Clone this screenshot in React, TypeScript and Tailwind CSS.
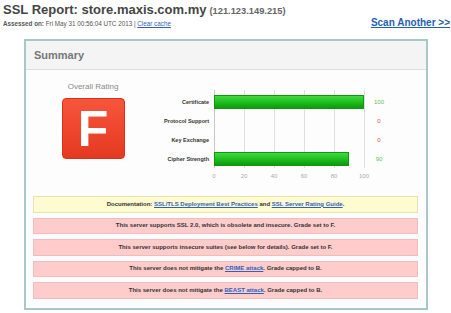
import React from "react";

const rows = [
  { label: "Certificate", value: 100 },
  { label: "Protocol Support", value: 0 },
  { label: "Key Exchange", value: 0 },
  { label: "Cipher Strength", value: 90 },
];

const ticks = [0, 20, 40, 60, 80, 100];

function Chart() {
  return (
    <div className="flex flex-col">
      <div className="flex">
        <div className="w-[49px] flex flex-col pt-[3px]">
          {rows.map((r) => (
            <div
              key={r.label}
              className="h-[19px] flex items-center justify-end whitespace-nowrap text-[5.5px] font-bold text-[#333]"
            >
              {r.label}
            </div>
          ))}
        </div>
        <div className="ml-[5px] relative w-[150px] h-[78px] flex flex-col pt-[3px]">
          {ticks.map((t) => (
            <div
              key={t}
              className={`absolute top-0 bottom-0 w-px ${t === 0 ? "bg-[#c8c8c8]" : "bg-[#dedede]"}`}
              style={{ left: t * 1.5 }}
            />
          ))}
          {rows.map((r) => (
            <div key={r.label} className="h-[19px] flex items-center relative">
              {r.value > 0 && (
                <div
                  className="h-[14px] bg-linear-to-b from-[#40d840] via-[#1fbf1f] to-[#0c9a0c] border border-[#0e9a0e]"
                  style={{ width: r.value * 1.5 }}
                />
              )}
            </div>
          ))}
        </div>
        <div className="w-[30px] flex flex-col pt-[3px]">
          {rows.map((r) => (
            <div
              key={r.label}
              className={`h-[19px] flex items-center justify-center text-[6px] ${r.value > 0 ? "text-[#5cbf5c]" : "text-[#e05050]"}`}
            >
              {r.value}
            </div>
          ))}
        </div>
      </div>
      <div className="ml-[54px] relative w-[150px] h-[14px]">
        {ticks.map((t) => (
          <span
            key={t}
            className="absolute top-[4px] -translate-x-1/2 text-[6px] text-[#aaa] leading-none"
            style={{ left: t * 1.5 }}
          >
            {t}
          </span>
        ))}
      </div>
    </div>
  );
}

function Notice({ yellow, children }: { yellow?: boolean; children: React.ReactNode }) {
  return (
    <div
      className={`h-[16.5px] flex items-center justify-center border text-[6px] font-bold text-[#333] whitespace-nowrap ${
        yellow ? "bg-[#fdfbcf] border-[#e6e2b2]" : "bg-[#ffcccc] border-[#f2bcbc]"
      }`}
    >
      {children}
    </div>
  );
}

const link = "text-[#2f5fbf] underline";

export default function App() {
  return (
    <div
      className="w-[451px] h-[313px] bg-white overflow-hidden relative"
      style={{ fontFamily: '"Liberation Sans", Arial, sans-serif' }}
    >
      <div className="pl-[3px] h-[19px] leading-[19px] flex items-baseline whitespace-nowrap">
        <span className="text-[13px] font-bold text-[#454545]">SSL Report: store.maxis.com.my</span>
        <span className="ml-[3px] text-[9.3px] font-bold text-[#666]">(121.123.149.215)</span>
      </div>
      <div className="flex justify-between items-start h-[20px]">
        <div className="pl-[3px] text-[6.3px] leading-[9px] text-[#555] whitespace-nowrap">
          <span className="font-bold">Assessed on:</span> Fri May 31 00:56:04 UTC 2013 |{" "}
          <span className={link}>Clear cache</span>
        </div>
        <div className="pr-[1px] -mt-[4px] text-[10px] font-bold text-[#1f5fb4] underline">Scan Another &gt;&gt;</div>
      </div>
      <div className="ml-[24px] w-[404px] h-[271px] border-2 border-[#a8c8c8] bg-[#fdfdfd] flex flex-col">
        <div className="h-[29px] bg-[#f4f4f4] border-b border-[#dcdcdc] flex items-center pl-[8px] text-[11px] font-bold text-[#777]">
          Summary
        </div>
        <div className="flex">
          <div className="w-[134px] flex flex-col items-center pt-[11px]">
            <div className="text-[8px] text-[#888]">Overall Rating</div>
            <div className="mt-[5px] w-[63px] h-[61px] rounded-[4px] border border-[#d8321c] bg-linear-to-b from-[#f6553c] to-[#e5391f] flex items-center justify-center">
              <span className="text-[50px] font-bold text-white leading-none">F</span>
            </div>
          </div>
          <div className="pt-[20px]">
            <Chart />
          </div>
        </div>
        <div className="mt-[13px] px-[7px] pr-[8px] flex flex-col gap-[5px]">
          <Notice yellow>
            Documentation:&nbsp;<span className={link}>SSL/TLS Deployment Best Practices</span>&nbsp;and&nbsp;
            <span className={link}>SSL Server Rating Guide</span>.
          </Notice>
          <Notice>This server supports SSL 2.0, which is obsolete and insecure. Grade set to F.</Notice>
          <Notice>This server supports insecure suites (see below for details). Grade set to F.</Notice>
          <Notice>
            This server does not mitigate the&nbsp;<span className={link}>CRIME attack</span>. Grade capped to B.
          </Notice>
          <Notice>
            This server does not mitigate the&nbsp;<span className={link}>BEAST attack</span>. Grade capped to B.
          </Notice>
        </div>
      </div>
    </div>
  );
}
